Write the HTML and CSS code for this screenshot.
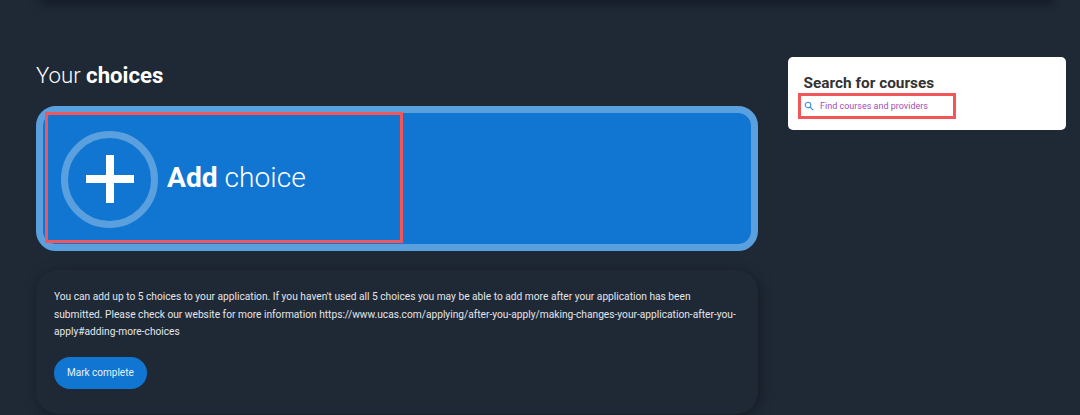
FILE: index.html
```html
<!DOCTYPE html>
<html lang="en">
<head>
  <meta charset="UTF-8">
  <title>Your choices</title>
  <link rel="stylesheet" href="styles.css">
</head>
<body>

<div class="top-card"></div>

<div class="page">
  <main class="main-col">
    <h2 class="section-title">Your <strong>choices</strong></h2>

    <a class="add-choice" href="#add">
      <span class="add-inner">
        <span class="add-circle">
          <svg width="48" height="48" viewBox="0 0 48 48"><path d="M20 0h8v20h20v8H28v20h-8V28H0v-8h20z" fill="#fff"/></svg>
        </span>
        <span class="add-label"><strong>Add</strong> choice</span>
      </span>
    </a>

    <section class="info-card">
      <p>You can add up to 5 choices to your application. If you haven't used all 5 choices you may be able to add more after your application has been submitted. Please check our website for more information https://www.ucas.com/applying/after-you-apply/making-changes-your-application-after-you-apply#adding-more-choices</p>
      <button class="btn-complete" type="button">Mark complete</button>
    </section>
  </main>

  <aside class="search-card">
    <h3>Search for courses</h3>
    <a class="search-link" href="#find">
      <svg width="10" height="10" viewBox="0 0 10 10"><circle cx="4" cy="4" r="2.8" fill="none" stroke="#3a8fd8" stroke-width="1.1"/><path d="M6.2 6.2 9.2 9.2" stroke="#3a8fd8" stroke-width="1.2"/></svg>
      <span>Find courses and providers</span>
    </a>
  </aside>
</div>

</body>
</html>
```

FILE: styles.css
```css
html, body {
  margin: 0;
  padding: 0;
  height: 415px;
  overflow: hidden;
}
body {
  background: #1f2936;
  font-family: Roboto, "Liberation Sans", sans-serif;
  color: #fff;
}
.top-card {
  height: 0;
  margin: 0 30px 0 44px;
  box-shadow: 0 0 10px 4px rgba(8, 8, 20, 0.5);
}
.page {
  display: flex;
  align-items: flex-start;
  padding-left: 36px;
}
.main-col {
  width: 721.5px;
}
.section-title {
  margin: 61px 0 17px;
  font-size: 22.2px;
  line-height: 28px;
  font-weight: 300;
}
.section-title strong {
  font-weight: 700;
}
.add-choice {
  display: block;
  height: 145px;
  box-sizing: border-box;
  border: 7px solid #5aa0df;
  border-radius: 20px;
  background: #1176d2;
  color: #fff;
  text-decoration: none;
}
.add-inner {
  display: flex;
  align-items: center;
  gap: 9px;
  width: 358px;
  height: 131px;
  box-sizing: border-box;
  margin: -1px 0 0 2px;
  padding: 3px 0 0 16px;
  outline: 3px solid #f0565a;
  outline-offset: -3px;
}
.add-circle {
  display: flex;
  align-items: center;
  justify-content: center;
  width: 97px;
  height: 97px;
  box-sizing: border-box;
  border: 7px solid #5aa0df;
  border-radius: 50%;
}
.add-label {
  margin-top: -4px;
  font-size: 28.2px;
  font-weight: 300;
}
.add-label strong {
  font-weight: 700;
}
.info-card {
  height: 144px;
  box-sizing: border-box;
  margin-top: 19px;
  padding: 18px 18px 0;
  border-radius: 22px;
  background: #1f2936;
  box-shadow: 2px 2px 14px rgba(0, 0, 0, 0.38);
}
.info-card p {
  margin: 0 0 16px;
  font-size: 10.2px;
  line-height: 17.6px;
  color: #e2e6ea;
}
.btn-complete {
  height: 32px;
  padding: 0 13px;
  border: 0;
  border-radius: 16px;
  background: #1176d2;
  color: #e8f1fa;
  font-family: inherit;
  font-size: 10px;
}
.search-card {
  width: 278px;
  height: 73px;
  box-sizing: border-box;
  margin: 57px 0 0 30.5px;
  padding: 17px 9px 0 15.5px;
  border-radius: 5px;
  background: #fff;
}
.search-card h3 {
  margin: 0;
  font-size: 15.4px;
  line-height: 19px;
  font-weight: 700;
  color: #333;
}
.search-link {
  display: flex;
  align-items: center;
  gap: 6px;
  width: 158px;
  height: 26px;
  box-sizing: border-box;
  margin-left: -5.5px;
  padding-left: 3px;
  border: 3px solid #f0565a;
  font-size: 9px;
  color: #a24db8;
  text-decoration: none;
}
```
